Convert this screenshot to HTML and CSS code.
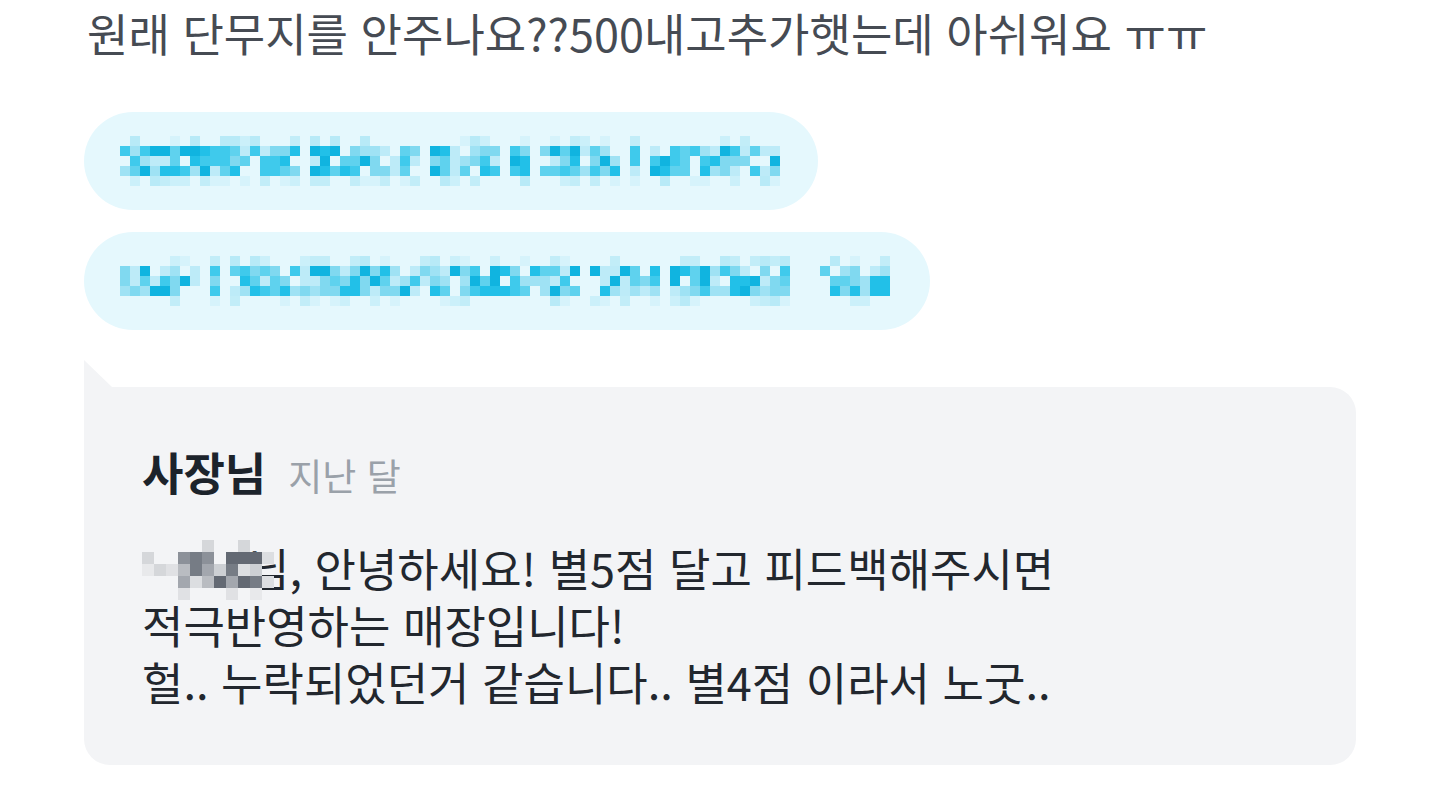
FILE: index.html
```html
<!DOCTYPE html>
<html lang="ko">
<head>
<meta charset="utf-8">
<title>리뷰</title>
<link rel="stylesheet" href="styles.css">
</head>
<body>
<main class="thread">
  <p class="review">원래 단무지를 안주나요??500내고추가햇는데 아쉬워요 ㅠㅠ</p>
  <div class="tags">
    <div class="tag tag-1">
      <svg class="mosaic" data-kind="cyan" data-cell="10" data-rows="5" data-seed="11" data-segs="0-17,19-29,31-37,39-40,42-49,51,53-65" width="660" height="50"></svg>
    </div>
    <div class="tag tag-2">
      <svg class="mosaic" data-kind="cyan" data-cell="10" data-rows="5" data-seed="29" data-segs="0-7,9,11-45,47-53,55-66,70-76" width="770" height="50"></svg>
    </div>
  </div>
  <section class="reply">
    <div class="reply-notch"></div>
    <div class="reply-box">
      <div class="reply-head">
        <strong class="reply-author">사장님</strong>
        <span class="reply-time">지난 달</span>
      </div>
      <p class="reply-body"><span class="masked">고객<svg class="mosaic mosaic-name" data-kind="gray" data-cell="12" data-rows="5" data-seed="5" data-segs="0-10" width="132" height="60"></svg></span>님, 안녕하세요! 별5점 달고 피드백해주시면<br>적극반영하는 매장입니다!<br>헐.. 누락되었던거 같습니다.. 별4점 이라서 노굿..</p>
    </div>
  </section>
</main>
<script src="script.js"></script>
</body>
</html>
```

FILE: styles.css
```css
* {
  box-sizing: border-box;
  margin: 0;
  padding: 0;
}

html,
body {
  background: #ffffff;
}

body {
  font-family: "Noto Sans CJK KR", "Noto Sans", sans-serif;
}

.thread {
  display: flex;
  flex-direction: column;
  padding: 0 84px;
}

.review {
  padding-left: 3px;
  font-size: 45px;
  line-height: 66px;
  color: #464b53;
}

.tags {
  display: flex;
  flex-direction: column;
  align-items: flex-start;
  gap: 22px;
  margin-top: 46px;
}

.tag {
  display: flex;
  align-items: center;
  height: 98px;
  padding-left: 36px;
  border-radius: 49px;
  background: #e5f8fd;
}

.tag-1 {
  width: 734px;
}

.tag-2 {
  width: 846px;
}

.mosaic {
  display: block;
}

.reply {
  display: flex;
  flex-direction: column;
  margin-top: 30px;
}

.reply-notch {
  width: 28px;
  height: 27px;
  background: #f3f4f6;
  clip-path: polygon(0 0, 0 100%, 100% 100%);
}

.reply-box {
  height: 378px;
  padding: 57px 0 0 58px;
  border-radius: 0 26px 26px 26px;
  background: #f3f4f6;
}

.reply-head {
  display: flex;
  align-items: baseline;
  gap: 22px;
  line-height: 56px;
}

.reply-author {
  font-size: 45px;
  font-weight: 700;
  color: #1c232b;
}

.reply-time {
  font-size: 37px;
  color: #9aa1a9;
}

.reply-body {
  margin-top: 36px;
  font-size: 45px;
  line-height: 57px;
  color: #22272e;
}

.masked {
  position: relative;
  display: inline-block;
  width: 106px;
  color: transparent;
  vertical-align: top;
}

.mosaic-name {
  position: absolute;
  left: 0;
  top: 1px;
}
```

FILE: script.js
```js
function makeRandom(seed) {
  var s = seed >>> 0;
  return function () {
    s = (Math.imul(s, 1664525) + 1013904223) >>> 0;
    return s / 4294967296;
  };
}

var palettes = {
  cyan: {
    strong: ["#10b4e0", "#22c0e8", "#3fcaec", "#5fd2ee", "#80d9f0", "#9fe2f4", "#bdebf8"],
    light: ["#b8eaf7", "#cbf0fa", "#d6f3fb", "#c2edf8"]
  },
  gray: {
    strong: ["#636973", "#767c85", "#8c9199", "#a3a7ae", "#b9bcc1", "#cdd0d4", "#dcdee1"],
    light: ["#d5d7da", "#e0e1e4", "#e8e9eb"]
  }
};

document.querySelectorAll("svg.mosaic").forEach(function (svg) {
  var cell = Number(svg.dataset.cell);
  var rows = Number(svg.dataset.rows);
  var pal = palettes[svg.dataset.kind];
  var rand = makeRandom(Number(svg.dataset.seed));
  var out = "";
  svg.dataset.segs.split(",").forEach(function (seg) {
    var parts = seg.split("-").map(Number);
    var a = parts[0];
    var b = parts.length > 1 ? parts[1] : parts[0];
    for (var c = a; c <= b; c++) {
      for (var y = 0; y < rows; y++) {
        var edge = (y === 0 || y === rows - 1);
        var skip = edge ? 0.55 : 0.1;
        if (svg.dataset.kind === "gray" && c < 3) {
          skip = edge ? 0.9 : 0.45;
          edge = true;
        }
        if (rand() < skip) continue;
        var list = edge ? pal.light : pal.strong;
        var color = list[Math.floor(rand() * list.length)];
        out += '<rect x="' + c * cell + '" y="' + y * cell + '" width="' + cell + '" height="' + cell + '" fill="' + color + '"/>';
      }
    }
  });
  svg.innerHTML = out;
});
```
